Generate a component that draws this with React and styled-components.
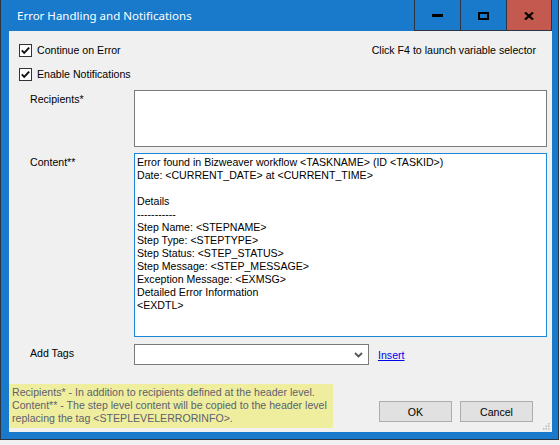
import React from 'react'
import styled, { createGlobalStyle } from 'styled-components'

const GlobalStyle = createGlobalStyle`
  html, body {
    margin: 0;
    padding: 0;
    background: #f0f0f0;
  }
  body {
    font-family: "Liberation Sans", Arial, sans-serif;
    font-size: 10.6px;
    color: #000;
  }
`

const contentText = `Error found in Bizweaver workflow <TASKNAME> (ID <TASKID>)
Date: <CURRENT_DATE> at <CURRENT_TIME>

Details
-----------
Step Name: <STEPNAME>
Step Type: <STEPTYPE>
Step Status: <STEP_STATUS>
Step Message: <STEP_MESSAGE>
Exception Message: <EXMSG>
Detailed Error Information
<EXDTL>`

const Check = () => (
  <svg width="13" height="13" viewBox="0 0 13 13">
    <rect x="0.5" y="0.5" width="12" height="12" fill="#fff" stroke="#333" />
    <path d="M2.8 6.4 L5.2 8.9 L10.2 3.6" fill="none" stroke="#111" strokeWidth="1.9" />
  </svg>
)

const App = () => {
  return (
    <>
      <GlobalStyle />
      <Window>
        <TitleBar>
          <Title>Error Handling and Notifications</Title>
          <CaptionButton>
            <svg width="11" height="3"><rect width="11" height="3" fill="#000" /></svg>
          </CaptionButton>
          <CaptionButton>
            <svg width="11" height="8"><rect x="1" y="1" width="9" height="6" fill="none" stroke="#000" strokeWidth="2" /></svg>
          </CaptionButton>
          <CaptionButton $close>
            <svg width="10" height="8" viewBox="0 0 10 8">
              <path d="M1 0.5 L9 7.5 M9 0.5 L1 7.5" stroke="#000" strokeWidth="2.2" />
            </svg>
          </CaptionButton>
        </TitleBar>

        <Body>
          <TopRow>
            <CheckRow>
              <Check />
              <span>Continue on Error</span>
            </CheckRow>
            <Hint>Click F4 to launch variable selector</Hint>
          </TopRow>
          <CheckRow $second>
            <Check />
            <span>Enable Notifications</span>
          </CheckRow>

          <FieldRow $top={9}>
            <Label>Recipients*</Label>
            <TextBox $h={57} />
          </FieldRow>

          <FieldRow $top={6}>
            <Label>Content**</Label>
            <TextBox $h={184} $focused>{contentText}</TextBox>
          </FieldRow>

          <FieldRow $top={7}>
            <Label>Add Tags</Label>
            <TagLine>
              <Combo>
                <svg width="9" height="6" viewBox="0 0 9 6">
                  <path d="M1 1 L4.5 4.5 L8 1" fill="none" stroke="#555" strokeWidth="1.8" />
                </svg>
              </Combo>
              <LinkText>Insert</LinkText>
            </TagLine>
          </FieldRow>

          <Footer>
            <Note>
              Recipients* - In addition to recipients defined at the header level.
              <br />
              Content** - The step level content will be copied to the header level
              <br />
              replacing the tag &lt;STEPLEVELERRORINFO&gt;.
            </Note>
            <Buttons>
              <DialogButton>OK</DialogButton>
              <DialogButton>Cancel</DialogButton>
            </Buttons>
          </Footer>

          <Grip width="7" height="7" viewBox="0 0 7 7">
            <rect x="5" y="0" width="1.5" height="1.5" fill="#b8b8b8" />
            <rect x="2.5" y="2.5" width="1.5" height="1.5" fill="#b8b8b8" />
            <rect x="5" y="2.5" width="1.5" height="1.5" fill="#b8b8b8" />
            <rect x="0" y="5" width="1.5" height="1.5" fill="#b8b8b8" />
            <rect x="2.5" y="5" width="1.5" height="1.5" fill="#b8b8b8" />
            <rect x="5" y="5" width="1.5" height="1.5" fill="#b8b8b8" />
          </Grip>
        </Body>
      </Window>
    </>
  )
}

export default App

const Window = styled.div`
  width: 559px;
  height: 440px;
  box-sizing: border-box;
  border: 1px solid #2b3440;
  border-top: none;
  background: #1979cb;
  display: flex;
  flex-direction: column;
  padding: 0 6px 7px 8px;
`

const TitleBar = styled.div`
  height: 31px;
  display: flex;
  align-items: stretch;
  flex-shrink: 0;
`

const Title = styled.div`
  flex: 1;
  color: #fff;
  font-family: "Noto Sans", "Liberation Sans", sans-serif;
  font-size: 11.5px;
  padding: 8px 0 0 8px;
`

const CaptionButton = styled.div`
  width: 46px;
  box-sizing: border-box;
  border-left: 1px solid #2b3440;
  border-bottom: 1px solid #2b3440;
  border-right: ${({ $close }) => ($close ? '1px solid #2b3440' : 'none')};
  background: ${({ $close }) => ($close ? '#c45a4f' : 'transparent')};
  display: flex;
  align-items: center;
  justify-content: center;
  padding-top: 1px;
`

const Body = styled.div`
  flex: 1;
  background: #f0f0f0;
  position: relative;
  display: flex;
  flex-direction: column;
`

const TopRow = styled.div`
  display: flex;
  justify-content: space-between;
  align-items: center;
  margin-top: 12px;
  padding-right: 16px;
`

const CheckRow = styled.label`
  display: flex;
  align-items: center;
  gap: 5px;
  margin-left: 10px;
  height: 14px;
  margin-top: ${({ $second }) => ($second ? '10px' : '0')};
`

const Hint = styled.div``

const FieldRow = styled.div`
  display: grid;
  grid-template-columns: 104px 413px;
  padding-left: 21px;
  margin-top: ${({ $top }) => $top}px;
`

const Label = styled.div`
  padding-top: 3px;
  line-height: 13px;
`

const TextBox = styled.div`
  height: ${({ $h }) => $h}px;
  box-sizing: border-box;
  background: #fff;
  border: 1px solid ${({ $focused }) => ($focused ? '#1c86d8' : '#7a7a7a')};
  padding: 2px 2px;
  white-space: pre;
  line-height: 13px;
  overflow: hidden;
`

const TagLine = styled.div`
  display: flex;
  align-items: center;
  gap: 9px;
`

const Combo = styled.div`
  width: 235px;
  height: 21px;
  box-sizing: border-box;
  background: #fff;
  border: 1px solid #7a7a7a;
  display: flex;
  align-items: center;
  justify-content: flex-end;
  padding-right: 5px;
`

const LinkText = styled.span`
  color: #0000ee;
  text-decoration: underline;
`

const Footer = styled.div`
  margin-top: 19px;
  display: flex;
  align-items: flex-start;
`

const Note = styled.div`
  width: 324px;
  height: 44px;
  box-sizing: border-box;
  background: #eeee9e;
  color: #5f5f6e;
  padding: 2px 0 0 3px;
  line-height: 13px;
  white-space: nowrap;
  overflow: hidden;
`

const Buttons = styled.div`
  display: flex;
  gap: 8px;
  margin: 17px 0 0 46px;
`

const DialogButton = styled.div`
  width: 73px;
  height: 21px;
  box-sizing: border-box;
  background: #e1e1e1;
  border: 1px solid #adadad;
  display: flex;
  align-items: center;
  justify-content: center;
`

const Grip = styled.svg`
  position: absolute;
  right: 2px;
  bottom: 2px;
`
